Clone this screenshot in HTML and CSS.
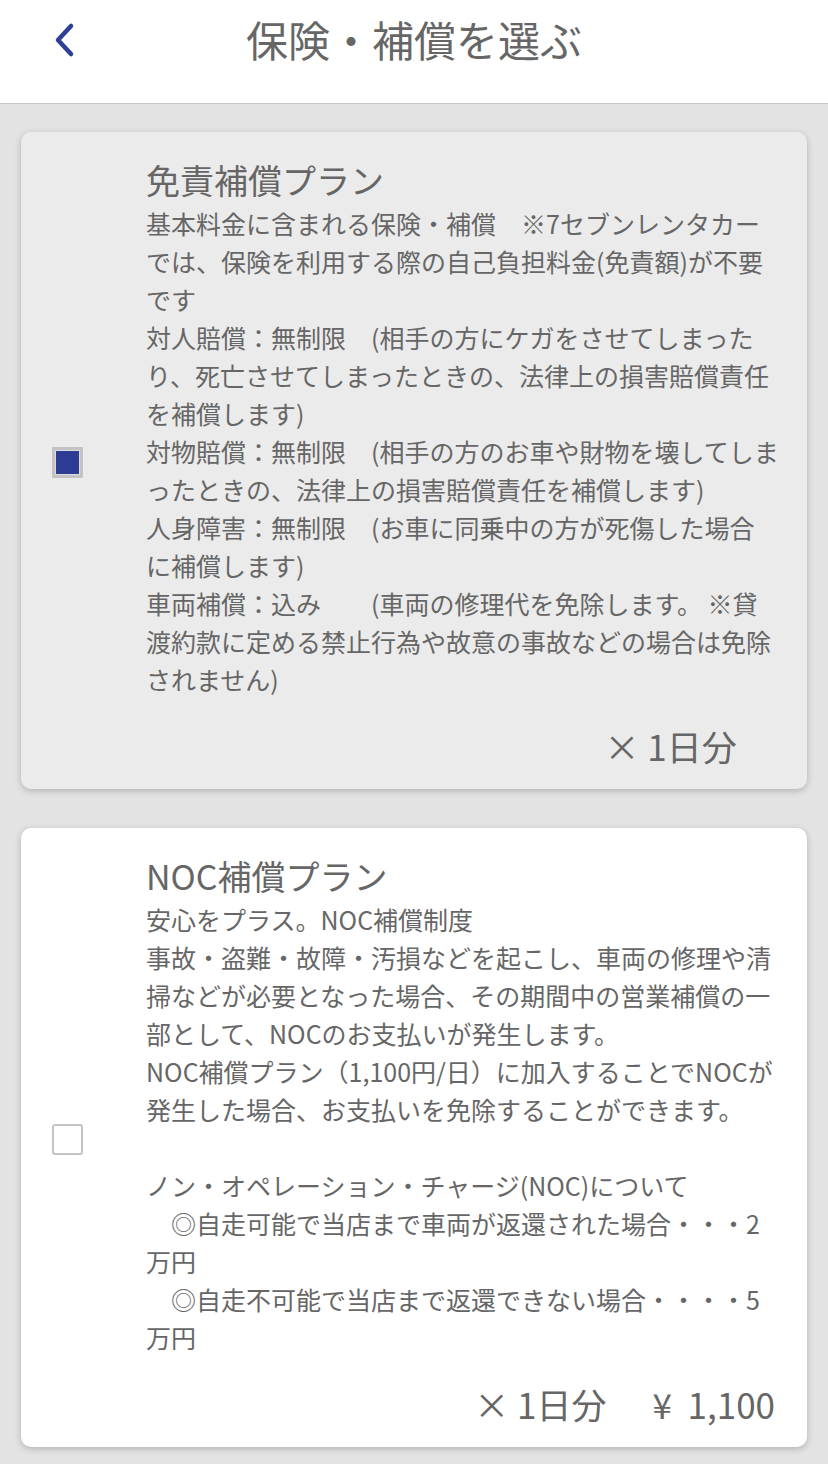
FILE: index.html
```html
<!DOCTYPE html>
<html lang="ja">
<head>
<meta charset="UTF-8">
<meta name="viewport" content="width=device-width, initial-scale=1.0">
<title>保険・補償を選ぶ</title>
<link rel="stylesheet" href="styles.css">
</head>
<body>
<header class="topbar">
  <a class="back" href="#" aria-label="戻る">
    <svg width="24" height="36" viewBox="0 0 24 36">
      <polyline points="19,4 6,18 19,32" fill="none" stroke="#2e3f99" stroke-width="4.5" stroke-linecap="round" stroke-linejoin="round"/>
    </svg>
  </a>
  <h1 class="topbar-title">保険・補償を選ぶ</h1>
  <span></span>
</header>

<main class="plans">
  <!-- 免責補償（基本料金に含まれる） -->
  <label class="plan plan--selected">
    <input type="checkbox" class="plan-check" checked>
    <div class="plan-body">
      <h2 class="plan-title">免責補償プラン</h2>
      <p>基本料金に含まれる保険・補償　※7セブンレンタカー<br>では、保険を利用する際の自己負担料金(免責額)が不要<br>です</p>
      <p>対人賠償：無制限　(相手の方にケガをさせてしまった<br>り、死亡させてしまったときの、法律上の損害賠償責任<br>を補償します)</p>
      <p>対物賠償：無制限　(相手の方のお車や財物を壊してしま<br>ったときの、法律上の損害賠償責任を補償します)</p>
      <p>人身障害：無制限　(お車に同乗中の方が死傷した場合<br>に補償します)</p>
      <p>車両補償：込み　　(車両の修理代を免除します。 ※貸<br>渡約款に定める禁止行為や故意の事故などの場合は免除<br>されません)</p>
    </div>
    <div class="plan-footer plan-footer--noprice">
      <span class="plan-days">× 1日分</span>
    </div>
  </label>

  <!-- NOC補償（オプション） -->
  <label class="plan">
    <input type="checkbox" class="plan-check">
    <div class="plan-body">
      <h2 class="plan-title">NOC補償プラン</h2>
      <p>安心をプラス。NOC補償制度</p>
      <p>事故・盗難・故障・汚損などを起こし、車両の修理や清<br>掃などが必要となった場合、その期間中の営業補償の一<br>部として、NOCのお支払いが発生します。</p>
      <p>NOC補償プラン（1,100円/日）に加入することでNOCが<br>発生した場合、お支払いを免除することができます。</p>
      <p class="spaced">ノン・オペレーション・チャージ(NOC)について</p>
      <p>　◎自走可能で当店まで車両が返還された場合・・・2<br>万円</p>
      <p>　◎自走不可能で当店まで返還できない場合・・・・5<br>万円</p>
    </div>
    <div class="plan-footer">
      <span class="plan-days">× 1日分</span>
      <span class="plan-price">¥&nbsp;&nbsp;1,100</span>
    </div>
  </label>
</main>
</body>
</html>
```

FILE: styles.css
```css
/* 保険・補償 選択画面 */
body {
  margin: 0;
  background-color: #e3e3e3;
  font-family: "Noto Sans CJK JP", "Noto Sans", sans-serif;
  color: #666;
}
.topbar {
  height: 104px;
  box-sizing: border-box;
  padding: 15px 0 0;
  display: grid;
  grid-template-columns: 1fr auto 1fr;
  align-items: start;
  background-color: #fff;
  border-bottom: 1px solid #cacaca;
}
.back {
  display: block;
  width: 24px;
  height: 36px;
  margin: 7px 0 0 52px;
}
.topbar-title {
  margin: 0;
  font-size: 42px;
  font-weight: 400;
  line-height: 48px;
  color: #666;
}
.plans {
  display: flex;
  flex-direction: column;
  gap: 39px;
  padding: 28px 21px 20px;
}
.plan {
  display: grid;
  grid-template-columns: 31px 1fr;
  column-gap: 63px;
  padding: 24px 32px 21px 31px;
  background-color: #fff;
  border-radius: 10px;
  box-shadow: 0 2px 7px rgba(0, 0, 0, 0.22);
  cursor: pointer;
}
.plan--selected {
  background-color: #ebebeb;
}
.plan-check {
  appearance: none;
  -webkit-appearance: none;
  grid-row: 1 / 3;
  align-self: center;
  width: 31px;
  height: 31px;
  margin: 0;
  box-sizing: border-box;
  border: 2px solid #c4c4c4;
  border-radius: 3px;
  background-color: #fff;
}
.plan-check:checked {
  border: 3px solid #c3c3c3;
  border-radius: 1px;
  background-color: #2c3c95;
  box-shadow: inset 0 0 0 1px #dcdcdc;
}
.plan-title {
  margin: 0;
  font-size: 34px;
  font-weight: 400;
  line-height: 48px;
}
.plan-body p {
  margin: 0;
  font-size: 25px;
  line-height: 38px;
  white-space: nowrap;
}
.plan-body p.spaced {
  margin-top: 38px;
}
.plan-footer {
  grid-column: 2;
  display: flex;
  justify-content: flex-end;
  gap: 46px;
  margin-top: 26px;
  font-size: 35px;
  line-height: 44px;
}
.plan-footer--noprice {
  padding-right: 42px;
}
```
